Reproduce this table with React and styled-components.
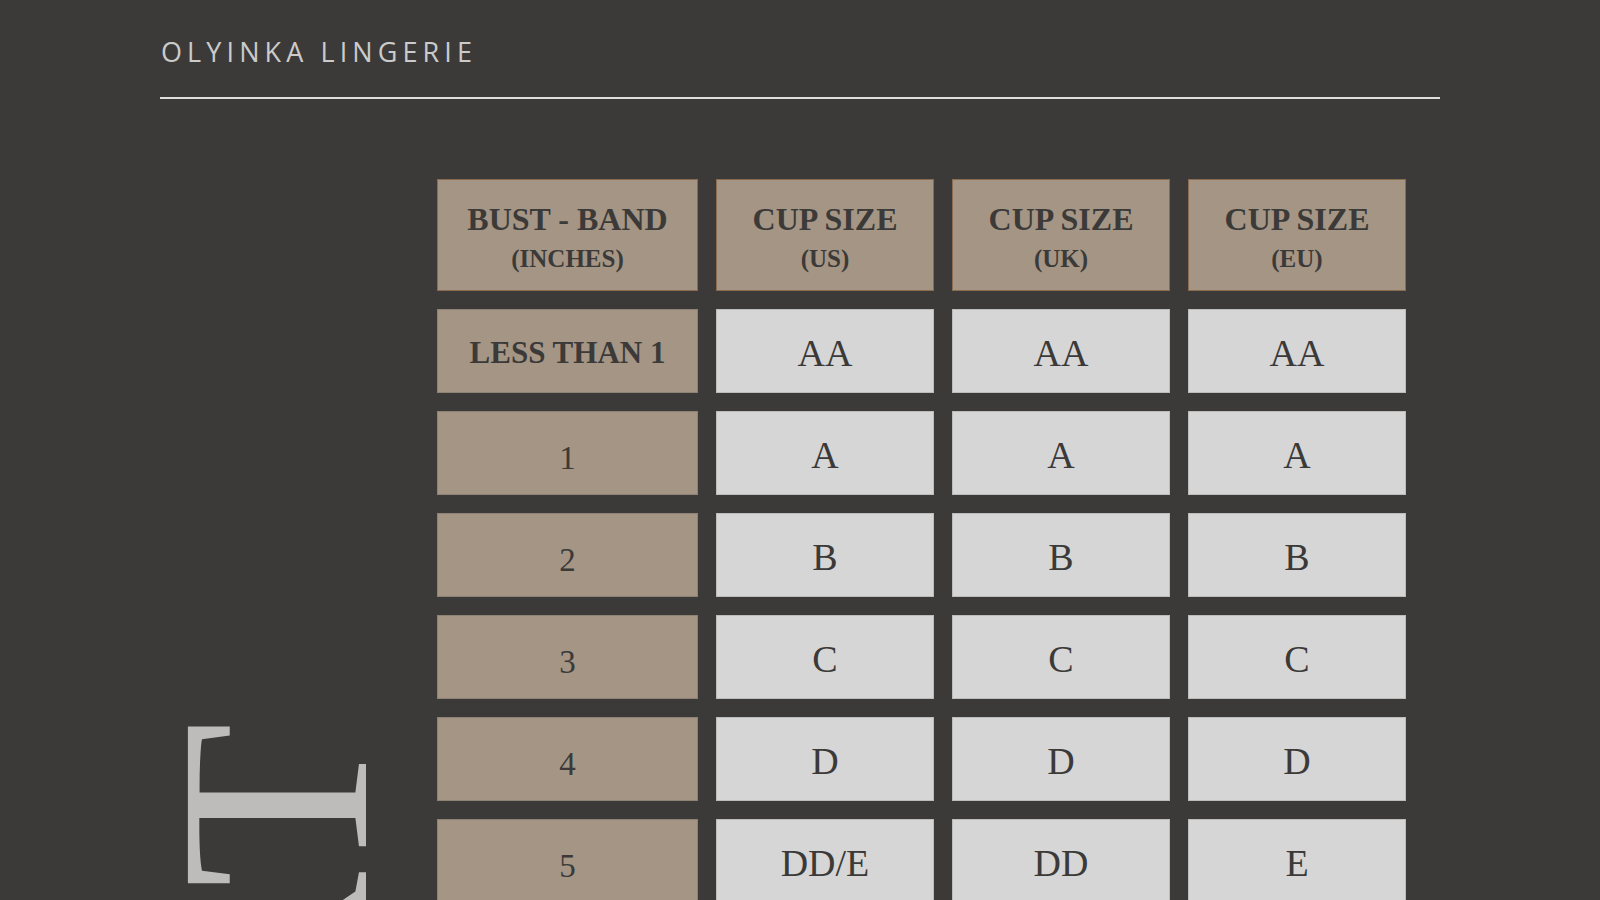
import React from 'react';
import styled, { createGlobalStyle } from 'styled-components';

const rows = [
  { band: 'LESS THAN 1', us: 'AA', uk: 'AA', eu: 'AA', bold: true },
  { band: '1', us: 'A', uk: 'A', eu: 'A' },
  { band: '2', us: 'B', uk: 'B', eu: 'B' },
  { band: '3', us: 'C', uk: 'C', eu: 'C' },
  { band: '4', us: 'D', uk: 'D', eu: 'D' },
  { band: '5', us: 'DD/E', uk: 'DD', eu: 'E' },
];

const headings = [
  { main: 'BUST - BAND', sub: '(INCHES)' },
  { main: 'CUP SIZE', sub: '(US)' },
  { main: 'CUP SIZE', sub: '(UK)' },
  { main: 'CUP SIZE', sub: '(EU)' },
];

const SizeChart = () => {
  return (
    <Page>
      <Header>
        <Brand>OLYINKA LINGERIE</Brand>
        <Rule />
      </Header>

      <Body>
        <Aside>
          <VerticalTitle>SIZE CHART</VerticalTitle>
        </Aside>

        <Table>
          {headings.map((h, i) => (
            <HeadCell key={i}>
              <HeadMain>{h.main}</HeadMain>
              <HeadSub>{h.sub}</HeadSub>
            </HeadCell>
          ))}

          {rows.map((r) => (
            <React.Fragment key={r.band}>
              <BandCell $bold={r.bold}>{r.band}</BandCell>
              <ValueCell>{r.us}</ValueCell>
              <ValueCell>{r.uk}</ValueCell>
              <ValueCell>{r.eu}</ValueCell>
            </React.Fragment>
          ))}
        </Table>
      </Body>
    </Page>
  );
};

// Styled Components
const GlobalStyle = createGlobalStyle`
  html, body {
    margin: 0;
    padding: 0;
    overflow: hidden;
    background-color: #3c3a38;
  }
`;

const Page = styled.div`
  width: 1600px;
  height: 900px;
  overflow: hidden;
  box-sizing: border-box;
  padding: 0 160px;
  background-color: #3c3a38;
`;

const Header = styled.header`
  padding-top: 38px;
`;

const Brand = styled.div`
  font-family: 'Open Sans', 'Liberation Sans', sans-serif;
  font-size: 27px;
  line-height: 1;
  letter-spacing: 5.1px;
  color: #cbcbcb;
  padding-left: 1px;
`;

const Rule = styled.div`
  margin-top: 32px;
  height: 2px;
  width: 1280px;
  background-color: #dedede;
`;

const Body = styled.main`
  display: grid;
  grid-template-columns: 277px 1fr;
  margin-top: 80px;
`;

const Aside = styled.div`
  padding-top: 543px;
`;

const VerticalTitle = styled.div`
  writing-mode: vertical-rl;
  transform: rotate(180deg);
  white-space: nowrap;
  font-family: 'Liberation Serif', serif;
  font-size: 272px;
  line-height: 1;
  color: #bdbcba;
  margin-left: -21px;
`;

const Table = styled.div`
  display: grid;
  grid-template-columns: 261px 218px 218px 218px;
  grid-template-rows: 112px;
  grid-auto-rows: 84px;
  column-gap: 18px;
  row-gap: 18px;
  font-family: 'Liberation Serif', serif;
  color: #3b3a38;
`;

const Cell = styled.div`
  box-sizing: border-box;
  display: flex;
  flex-direction: column;
  align-items: center;
  justify-content: center;
  text-align: center;
`;

const HeadCell = styled(Cell)`
  background-color: #a49585;
  border: 1px solid #8c6c4e;
  padding-top: 5px;
`;

const HeadMain = styled.div`
  font-size: 32px;
  font-weight: 700;
  line-height: 36px;
`;

const HeadSub = styled.div`
  font-size: 25px;
  font-weight: 700;
  line-height: 30px;
  margin-top: 7px;
`;

const BandCell = styled(Cell)`
  background-color: #a49585;
  border: 1px solid #8e8274;
  font-size: ${(p) => (p.$bold ? '31px' : '33px')};
  font-weight: ${(p) => (p.$bold ? 700 : 400)};
  line-height: 1;
  padding-top: ${(p) => (p.$bold ? '3px' : '10px')};
`;

const ValueCell = styled(Cell)`
  background-color: #d6d6d6;
  border: 1px solid #bcbcbc;
  font-size: 38px;
  line-height: 1;
  padding-top: 4px;
`;

const App = () => {
  return (
    <>
      <GlobalStyle />
      <SizeChart />
    </>
  );
};

export default App;
